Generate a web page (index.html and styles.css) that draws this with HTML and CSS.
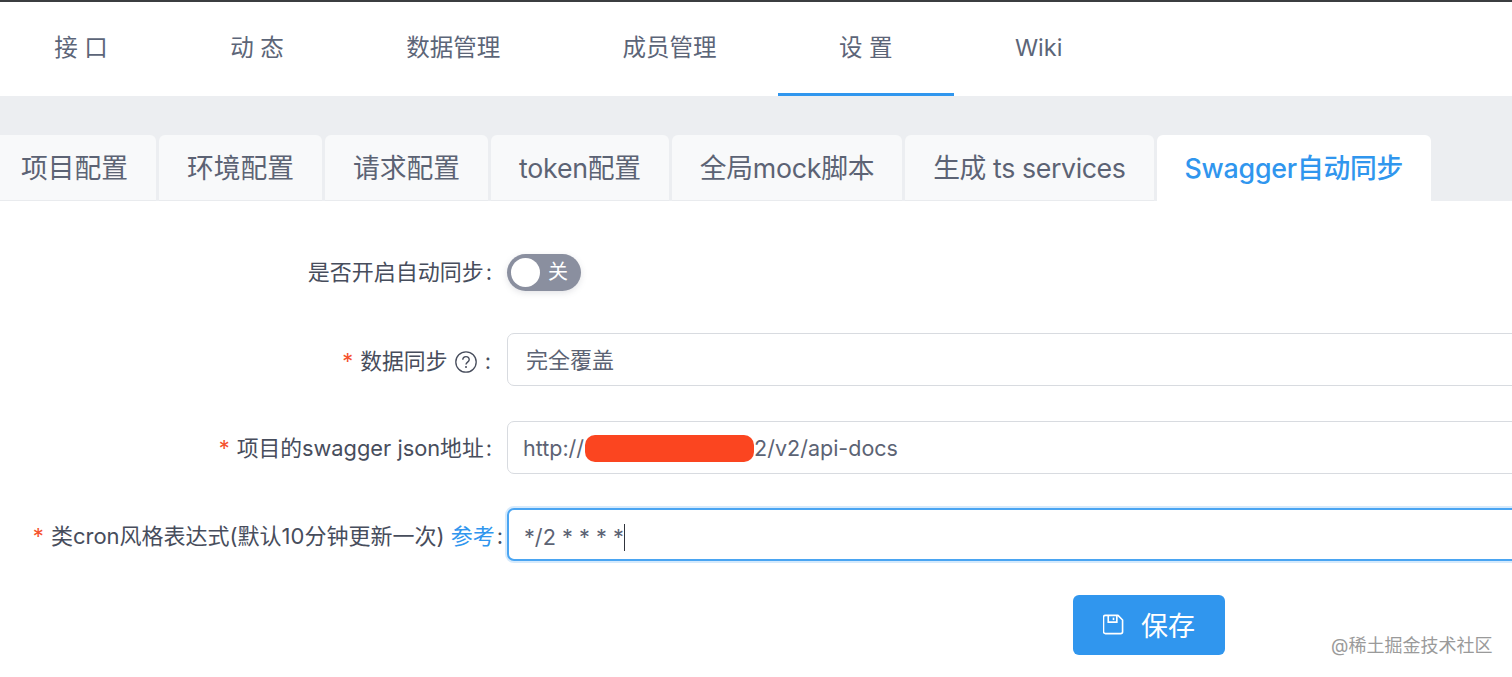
FILE: index.html
```html
<!DOCTYPE html>
<html lang="zh-CN">
<head>
<meta charset="utf-8">
<title>Swagger自动同步</title>
<link rel="stylesheet" href="styles.css">
</head>
<body>
<div class="page">
  <nav class="nav">
    <a class="nav-item">接 口</a>
    <a class="nav-item">动 态</a>
    <a class="nav-item">数据管理</a>
    <a class="nav-item">成员管理</a>
    <a class="nav-item active">设 置</a>
    <a class="nav-item">Wiki</a>
  </nav>
  <section class="band">
    <div class="tabs">
      <div class="tab">项目配置</div>
      <div class="tab">环境配置</div>
      <div class="tab">请求配置</div>
      <div class="tab snug">token配置</div>
      <div class="tab snug">全局mock脚本</div>
      <div class="tab tight">生成 ts services</div>
      <div class="tab current">Swagger自动同步</div>
    </div>
  </section>
  <form class="form">
    <div class="label first">是否开启自动同步<span class="colon">:</span></div>
    <div class="control">
      <div class="switch"><span class="knob"></span><span class="switch-text">关</span></div>
    </div>

    <div class="label"><span class="star">*</span>数据同步
      <svg class="help" viewBox="0 0 22 22" aria-hidden="true">
        <circle cx="11" cy="11" r="10.2" fill="none" stroke="currentColor" stroke-width="1.3"/>
        <path d="M7.8 8.8a3.2 3.2 0 0 1 6.4 0c0 2.2-3.2 2.4-3.2 4.6" fill="none" stroke="currentColor" stroke-width="1.4"/>
        <circle cx="11" cy="16" r="1" fill="currentColor"/>
      </svg>
      <span class="colon wide">:</span></div>
    <div class="input select">完全覆盖</div>

    <div class="label"><span class="star">*</span>项目的swagger json地址<span class="colon">:</span></div>
    <div class="input">http://<span class="redact"></span>2/v2/api-docs</div>

    <div class="label overflow"><span class="star">*</span>类cron风格表达式(默认10分钟更新一次) <a class="link">参考</a><span class="colon">:</span></div>
    <div class="input focus">*/2 * * * *<span class="caret"></span></div>

    <div class="actions">
      <button class="save" type="button">
        <svg class="save-icon" viewBox="0 0 22 22" aria-hidden="true">
          <path d="M2.5 1.5h13.2l4.8 4.8v12.2a2 2 0 0 1-2 2h-16a2 2 0 0 1-2-2v-15a2 2 0 0 1 2-2z" fill="none" stroke="currentColor" stroke-width="1.7" stroke-linejoin="round"/>
          <path d="M5.5 1.8v6.7h9V1.8" fill="none" stroke="currentColor" stroke-width="1.7"/>
          <path d="M11 3.8v2.6" fill="none" stroke="currentColor" stroke-width="1.7"/>
        </svg>
        <span>保存</span>
      </button>
    </div>
  </form>
  <div class="watermark">@稀土掘金技术社区</div>
</div>
</body>
</html>
```
FILE: styles.css
```css
* { box-sizing: border-box; }
html, body { margin: 0; padding: 0; background: #fff; }
body {
  font-family: Inter, "Noto Sans CJK SC", sans-serif;
  color: #474d5c;
}
.page {
  position: relative;
  width: 1512px;
  height: 677px;
  overflow: hidden;
  border-top: 2px solid #3b3d40;
}
.nav {
  display: flex;
  height: 94px;
  margin-left: -7px;
  background: #fff;
}
.nav-item {
  height: 94px;
  padding: 30px 61.2px 0;
  font-size: 23.5px;
  line-height: 32px;
  color: #5c6578;
  border-bottom: 3px solid transparent;
}
.nav-item.active { border-bottom-color: #3096ee; }
.band {
  height: 105px;
  padding-top: 39px;
  background: #eceef1;
}
.tabs {
  display: flex;
  gap: 3px;
  height: 66px;
  margin-left: -7px;
}
.tab {
  padding: 15px 28px 0;
  font-size: 26.75px;
  line-height: 36px;
  color: #5c6374;
  white-space: nowrap;
  background: #f8f9fa;
  border-bottom: 1px solid #e9ebee;
  border-radius: 6px 6px 0 0;
}
.tab.snug { letter-spacing: -0.25px; }
.tab.tight { letter-spacing: -0.4px; }
.tab.current {
  background: #fff;
  border-bottom-color: #fff;
  color: #3096ee;
  font-weight: 500;
  letter-spacing: -0.2px;
}
.form {
  display: grid;
  grid-template-columns: 494px 1284px;
  grid-auto-rows: 53px;
  column-gap: 13px;
  row-gap: 34.3px;
  align-items: center;
  padding-top: 45px;
}
.label {
  padding-top: 2px;
  font-size: 21.8px;
  line-height: 30px;
  text-align: right;
  white-space: nowrap;
  color: #474d5c;
}
.label.first {
  padding-top: 0;
  padding-bottom: 2px;
  font-size: 22px;
}
.label.overflow {
  margin-right: -9px;
  padding-top: 4px;
  font-size: 22px;
}
.colon { margin-left: 2px; margin-right: 2px; }
.colon.wide { margin-left: 2px; margin-right: 3px; }
.overflow .colon { margin-right: 0; }
.star {
  margin-right: 7px;
  color: #f5522d;
}
.help {
  width: 22px;
  height: 22px;
  margin-left: 1px;
  vertical-align: -4px;
}
.link { color: #3096ee; }
.control { display: flex; align-items: center; }
.switch {
  position: relative;
  width: 74px;
  height: 37px;
  border-radius: 19px;
  background: #8a8f9f;
  box-shadow: 0 2px 6px rgba(100, 105, 120, 0.18);
}
.knob {
  position: absolute;
  top: 4px;
  left: 4px;
  width: 29px;
  height: 29px;
  border-radius: 50%;
  background: #fff;
}
.switch-text {
  position: absolute;
  top: 6px;
  left: 41px;
  font-size: 20px;
  line-height: 25px;
  color: #fff;
}
.input {
  display: flex;
  align-items: center;
  height: 53px;
  padding-left: 15px;
  padding-top: 2px;
  font-size: 21.5px;
  line-height: 30px;
  color: #5c6374;
  white-space: pre;
  border: 1.5px solid #d8dbe0;
  border-radius: 7px;
  background: #fff;
}
.input.select {
  padding-left: 18px;
  padding-top: 0;
  font-size: 22px;
}
.input.focus {
  padding-top: 6px;
  font-size: 21.7px;
  border: 2px solid #4aa5f2;
  box-shadow: 0 0 0 2px rgba(48, 150, 238, 0.2);
}
.redact {
  width: 169px;
  height: 27px;
  margin-left: 1px;
  border-radius: 10px;
  background: #fb4520;
}
.caret {
  width: 1.5px;
  height: 27px;
  background: #30343c;
}
.actions {
  grid-column: 2;
  display: flex;
  justify-content: center;
  height: 60px;
  align-self: start;
}
.save {
  display: flex;
  align-items: center;
  justify-content: center;
  gap: 17px;
  width: 152px;
  height: 60px;
  padding: 0 0 1px;
  font: inherit;
  font-size: 27px;
  color: #fff;
  background: #3096ee;
  border: 0;
  border-radius: 6px;
}
.save-icon { width: 21px; height: 21px; }
.watermark {
  position: absolute;
  left: 1331px;
  top: 632px;
  font-size: 18px;
  line-height: 24px;
  color: #9a9a9a;
  white-space: nowrap;
}
```
